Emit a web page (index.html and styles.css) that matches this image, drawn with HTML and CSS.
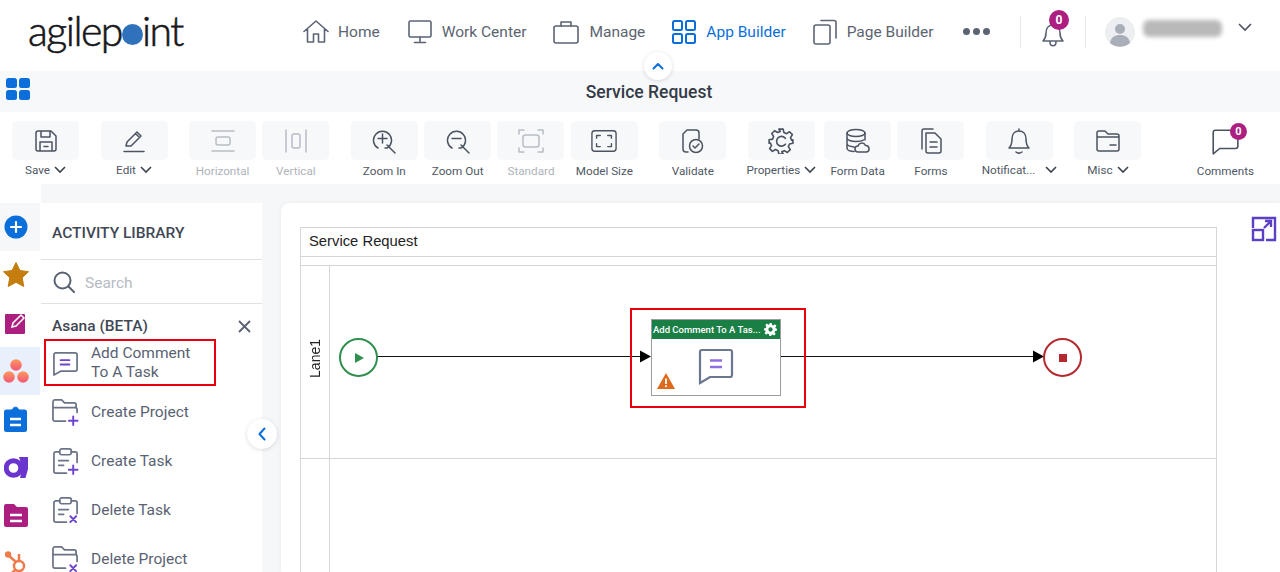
FILE: index.html
```html
<!DOCTYPE html>
<html lang="en">
<head>
<meta charset="utf-8">
<title>Service Request</title>
<link rel="stylesheet" href="styles.css">
</head>
<body>
<div class="app">
  <header class="topbar">
    <div class="logo">agilep<span class="logo-dot"></span>int</div>
    <nav class="nav">
      <a class="nav-item tight"><svg class="nav-ico" width="26" height="26" viewBox="0 0 26 26"><path d="M1 12.500 13 2l12 10.500M4.500 10v13h6v-8h5v8h6V10"/></svg>Home</a>
      <a class="nav-item"><svg class="nav-ico" width="24" height="26" viewBox="0 0 24 26"><rect x="1" y="2" width="22" height="16" rx="1.500"/><path d="M12 18v5M6.500 23.500h11"/></svg>Work Center</a>
      <a class="nav-item"><svg class="nav-ico" width="26" height="26" viewBox="0 0 26 26"><rect x="1" y="7" width="24" height="17" rx="2"/><path d="M8 7V3h10v4"/></svg>Manage</a>
      <a class="nav-item active"><svg class="nav-ico" width="24" height="24" viewBox="0 0 24 24"><rect x="1" y="1" width="9" height="9" rx="1.500"/><rect x="14" y="1" width="9" height="9" rx="1.500"/><rect x="1" y="14" width="9" height="9" rx="1.500"/><rect x="14" y="14" width="9" height="9" rx="1.500"/></svg>App Builder</a>
      <a class="nav-item"><svg class="nav-ico" width="24" height="26" viewBox="0 0 24 26"><rect x="1" y="6" width="16" height="19" rx="2"/><path d="M8 1.500h13a2 2 0 0 1 2 2V19"/></svg>Page Builder</a>
      <div class="dots"><i></i><i></i><i></i></div>
    </nav>
    <div class="divider first"></div>
    <div class="bell">
      <svg class="nav-ico" width="24" height="28" viewBox="0 0 24 28"><path d="M2 21c2-2 3-4 3-8 0-5 3-8 7-8s7 3 7 8c0 4 1 6 3 8zM9 22c0 5 6 5 6 0"/></svg>
      <span class="badge">0</span>
    </div>
    <div class="divider"></div>
    <div class="avatar"><svg width="30" height="30" viewBox="0 0 30 30"><circle cx="15" cy="15" r="15" fill="#eceef1"/><circle cx="15" cy="12" r="5" fill="#a9aeb8"/><path d="M5 26c1-6 5-8 10-8s9 2 10 8a15 15 0 0 1-20 0z" fill="#a9aeb8"/></svg></div>
    <div class="username"></div>
    <svg class="user-chev" width="14" height="9" viewBox="0 0 14 9"><path d="M1 1l6 6 6-6"/></svg>
  </header>
  <button class="collapse-top"><svg width="12" height="8" viewBox="0 0 12 8"><path d="M1.500 6.500 6 2l4.500 4.500"/></svg></button>

  <div class="titlebar">
    <svg class="grid-ico" width="24" height="22" viewBox="0 0 24 22"><rect width="11" height="10" rx="2.500"/><rect x="13" width="11" height="10" rx="2.500"/><rect y="12" width="11" height="10" rx="2.500"/><rect x="13" y="12" width="11" height="10" rx="2.500"/></svg>
    <h1 class="title">Service Request</h1>
  </div>

  <div class="toolbar">
    <div class="tool menu"><div class="tool-btn"><svg class="ico" viewBox="0 0 24 24"><path d="M4 2h13l5 5v13a2 2 0 0 1-2 2H4a2 2 0 0 1-2-2V4a2 2 0 0 1 2-2zM7 2v6h9V2M6 22v-9h12v9M10 17.500h4"/></svg></div><span class="tool-label">Save<svg class="chev" viewBox="0 0 12 8"><path d="M1 1l5 5 5-5"/></svg></span></div>
    <div class="tool menu"><div class="tool-btn"><svg class="ico" viewBox="0 0 24 24"><path d="M4 17l1-4L15 3l4 4L9 17zM13.500 4.500l4 4M2 22.500h20"/></svg></div><span class="tool-label">Edit<svg class="chev" viewBox="0 0 12 8"><path d="M1 1l5 5 5-5"/></svg></span></div>
    <div class="tool-group">
      <div class="tool off"><div class="tool-btn"><svg class="ico" viewBox="0 0 24 24"><path d="M1 2h22M1 22h22"/><rect x="5" y="8" width="14" height="8" rx="2"/></svg></div><span class="tool-label">Horizontal</span></div>
      <div class="tool off"><div class="tool-btn"><svg class="ico" viewBox="0 0 24 24"><path d="M2 1v22M22 1v22"/><rect x="8" y="5" width="8" height="14" rx="2"/></svg></div><span class="tool-label">Vertical</span></div>
    </div>
    <div class="tool-group">
      <div class="tool"><div class="tool-btn"><svg class="ico big" viewBox="0 0 26 26"><path d="M7 20a9 9 0 1 1 9 0h-2M16 17l8 8M11.500 6v9M7 10.500h9"/></svg></div><span class="tool-label">Zoom In</span></div>
      <div class="tool"><div class="tool-btn"><svg class="ico big" viewBox="0 0 26 26"><path d="M7 20a9 9 0 1 1 9 0h-2M16 17l8 8M7 10.500h9"/></svg></div><span class="tool-label">Zoom Out</span></div>
      <div class="tool off"><div class="tool-btn"><svg class="ico big" viewBox="0 0 26 26"><path d="M1 6V2h5M20 2h5v4M25 20v4h-5M6 24H1v-4"/><rect x="5" y="7" width="16" height="12" rx="2.500"/></svg></div><span class="tool-label">Standard</span></div>
      <div class="tool"><div class="tool-btn"><svg class="ico big" viewBox="0 0 28 24"><rect x="1" y="1" width="26" height="22" rx="3"/><path d="M6 9V6h4M18 6h4v3M22 15v3h-4M10 18H6v-3"/></svg></div><span class="tool-label">Model Size</span></div>
    </div>
    <div class="tool"><div class="tool-btn"><svg class="ico big" viewBox="0 0 26 26"><path d="M8 24H6a3 3 0 0 1-3-3V6l4-4h9a3 3 0 0 1 3 3v6"/><circle cx="16" cy="18" r="6.500"/><path d="M13 18l2 2 4-4"/></svg></div><span class="tool-label">Validate</span></div>
    <div class="tool-group">
      <div class="tool menu"><div class="tool-btn"><svg class="ico big" viewBox="0 0 24 24"><path d="M10 1h4l.7 3.200 2.400 1 2.800-1.700 2.600 2.600-1.700 2.800 1 2.400L23 10.900v3.200l-3.200.7-1 2.400 1.700 2.800-2.600 2.600-2.800-1.700-2.400 1L14 24h-4l-.7-3.100-2.400-1-2.800 1.700-2.600-2.600 1.700-2.800-1-2.400L1 14.100v-3.200l3.200-.6 1-2.400L3.500 5.100l2.600-2.600 2.800 1.700 2.400-1z"/><path d="M16 9.500a4.500 4.500 0 1 0 0 5.500"/></svg></div><span class="tool-label">Properties<svg class="chev" viewBox="0 0 12 8"><path d="M1 1l5 5 5-5"/></svg></span></div>
      <div class="tool shifted"><div class="tool-btn"><svg class="ico big" viewBox="0 0 26 26"><ellipse cx="11" cy="5" rx="9" ry="3.500"/><path d="M2 5v15c0 2 3 3.500 7 3.500M20 5v7M2 10c0 2 4 3.500 9 3.500 3 0 6-.5 7.500-1.500M2 15.500c0 2 3 3 7 3.500M13 24a3 3 0 0 1 0-6 4 4 0 0 1 7.500-.5A3.300 3.300 0 0 1 21.500 24z"/></svg></div><span class="tool-label">Form Data</span></div>
      <div class="tool"><div class="tool-btn"><svg class="ico big" viewBox="0 0 26 26"><path d="M4 21V3a2 2 0 0 1 2-2h9"/><path d="M8 5h9l6 6v12a2 2 0 0 1-2 2H10a2 2 0 0 1-2-2zM12 14h7M12 19h7"/></svg></div><span class="tool-label">Forms</span></div>
    </div>
    <div class="tool menu"><div class="tool-btn"><svg class="ico big" viewBox="0 0 26 26"><path d="M13 1v2M3 20c2-2 3-4 3-9 0-5 3-8 7-8s7 3 7 8c0 5 1 7 3 9zM10 24c2 1.500 4 1.500 6 0"/></svg></div><span class="tool-label">Notificat...<svg class="chev wide" viewBox="0 0 12 8"><path d="M1 1l5 5 5-5"/></svg></span></div>
    <div class="tool menu"><div class="tool-btn"><svg class="ico big" viewBox="0 0 26 26"><path d="M2 9V5a2 2 0 0 1 2-2h6l3 3h9a2 2 0 0 1 2 2v2M2 9h22M2 9v12a2 2 0 0 0 2 2h18a2 2 0 0 0 2-2V9M15 17h6"/></svg></div><span class="tool-label">Misc<svg class="chev" viewBox="0 0 12 8"><path d="M1 1l5 5 5-5"/></svg></span></div>
    <div class="tool comments"><div class="tool-btn plain"><svg class="ico large" viewBox="0 0 28 28"><path d="M20 4H5a2 2 0 0 0-2 2v20l6-5h15a2 2 0 0 0 2-2v-7"/></svg><span class="badge small">0</span></div><span class="tool-label">Comments</span></div>
  </div>

  <main class="workspace">
    <aside class="rail">
      <div class="rail-item top"><svg width="24" height="24" viewBox="0 0 24 24"><circle cx="12" cy="12" r="11.500" fill="#0b6fdb"/><path d="M12 7v10M7 12h10" stroke="#fff" stroke-width="2.200" stroke-linecap="round"/></svg></div>
      <div class="rail-item"><svg width="26" height="26" viewBox="0 0 26 26"><path d="M13 .5l3.900 8 8.600 1.200-6.300 6 1.600 8.800L13 20.300 5.200 24.500l1.600-8.800-6.300-6 8.600-1.200z" fill="#c47d0e" stroke="#c47d0e" stroke-linejoin="round"/></svg></div>
      <div class="rail-item"><svg width="22" height="22" viewBox="0 0 22 22"><rect y="2" width="20" height="20" rx="1" fill="#ac1f80"/><path d="M7 15l1-4 8-8 3 3-8 8z" fill="#ac1f80" stroke="#fff" stroke-width="1.500"/></svg></div>
      <div class="rail-item selected"><svg width="26" height="24" viewBox="0 0 26 24"><defs><linearGradient id="asana" x1="0" y1="0" x2="0" y2="1"><stop offset="0" stop-color="#ff9a5a"/><stop offset="1" stop-color="#f2557a"/></linearGradient></defs><circle cx="13" cy="6" r="5.800" fill="url(#asana)"/><circle cx="6" cy="18" r="5.800" fill="url(#asana)"/><circle cx="20" cy="18" r="5.800" fill="url(#asana)"/></svg></div>
      <div class="rail-item"><svg width="24" height="26" viewBox="0 0 24 26"><rect y="3.500" width="23" height="22.500" rx="2.500" fill="#0b6fdb"/><path d="M7 6 9 2.500a3 3 0 0 1 5 0L16 6z" fill="#0b6fdb" stroke="#0b6fdb"/><path d="M6 13h11M6 19h11" stroke="#fff" stroke-width="2.500"/></svg></div>
      <div class="rail-item"><svg width="24" height="22" viewBox="0 0 24 22"><circle cx="9.500" cy="12" r="7.300" fill="none" stroke="#6a35cf" stroke-width="5"/><path d="M15 1H24V22H16L18.500 12z" fill="#6a35cf"/><path d="M24 13 21.500 22H24z" fill="#fff"/></svg></div>
      <div class="rail-item"><svg width="24" height="24" viewBox="0 0 24 24"><path d="M2 1h8l3 3h9a2 2 0 0 1 2 2v16a2 2 0 0 1-2 2H2a2 2 0 0 1-2-2V3a2 2 0 0 1 2-2z" fill="#ac1f80"/><path d="M6 12h12M6 18h12" stroke="#fff" stroke-width="2.500"/></svg></div>
      <div class="rail-item"><svg width="22" height="24" viewBox="0 0 22 24" fill="none" stroke="#ef7a4c" stroke-width="2.500"><circle cx="14" cy="15" r="5"/><path d="M3 4l8 7M14 10V3M10 19l-4 4"/><circle cx="3" cy="3.500" r="2" fill="#ef7a4c"/></svg></div>
    </aside>

    <section class="library">
      <h2 class="lib-title">ACTIVITY LIBRARY</h2>
      <div class="lib-search"><svg class="search-ico" width="22" height="22" viewBox="0 0 22 22"><circle cx="9.500" cy="9.500" r="8"/><path d="M15.500 15.500l5.500 5.500"/></svg><span>Search</span></div>
      <div class="lib-head"><span>Asana (BETA)</span><svg class="close" width="13" height="13" viewBox="0 0 13 13"><path d="M1 1l11 11M12 1 1 12"/></svg></div>
      <ul class="lib-list">
        <li class="lib-item marked"><svg class="lib-ico" width="27" height="27" viewBox="0 0 28 28"><path d="M4 3h20a2 2 0 0 1 2 2v15a2 2 0 0 1-2 2H9l-7 4V5a2 2 0 0 1 2-2z"/><path class="accent" d="M9 10.500h9M9 15h9"/></svg><span>Add Comment<br>To A Task</span></li>
        <li class="lib-item"><svg class="lib-ico" width="27" height="27" viewBox="0 0 28 28"><path d="M14 23H3a2 2 0 0 1-2-2V3a2 2 0 0 1 2-2h7l3 3h10a2 2 0 0 1 2 2v3M1 9h23a2 2 0 0 1 2 2v3"/><path class="accent" d="M22 18v9M17.500 22.500h9"/></svg><span>Create Project</span></li>
        <li class="lib-item"><svg class="lib-ico" width="27" height="27" viewBox="0 0 28 28"><path d="M8 4H4a2 2 0 0 0-2 2v18a2 2 0 0 0 2 2h11M20 4h4a2 2 0 0 1 2 2v9"/><rect x="8" y="1" width="12" height="6" rx="2"/><path d="M7 13h10M7 18h5"/><path class="accent" d="M22 18v9M17.500 22.500h9"/></svg><span>Create Task</span></li>
        <li class="lib-item"><svg class="lib-ico" width="27" height="27" viewBox="0 0 28 28"><path d="M8 4H4a2 2 0 0 0-2 2v18a2 2 0 0 0 2 2h11M20 4h4a2 2 0 0 1 2 2v11"/><rect x="8" y="1" width="12" height="6" rx="2"/><path d="M7 13h10M7 18h5"/><path class="accent" d="M19 20l6 6M25 20l-6 6"/></svg><span>Delete Task</span></li>
        <li class="lib-item"><svg class="lib-ico" width="27" height="27" viewBox="0 0 28 28"><path d="M14 23H3a2 2 0 0 1-2-2V3a2 2 0 0 1 2-2h7l3 3h10a2 2 0 0 1 2 2v3M1 9h23a2 2 0 0 1 2 2v5"/><path class="accent" d="M19 20l6 6M25 20l-6 6"/></svg><span>Delete Project</span></li>
      </ul>
      <button class="collapse-side"><svg width="8" height="14" viewBox="0 0 8 14"><path d="M6.500 1.500 1.500 7l5 5.500"/></svg></button>
    </section>

    <section class="canvas">
      <div class="pool">
        <div class="pool-head">Service Request</div>
        <div class="lane first"><div class="lane-label"><span>Lane1</span></div><div class="lane-body"></div></div>
        <div class="lane"><div class="lane-label"></div><div class="lane-body"></div></div>
      </div>
      <svg class="expand" width="26" height="26" viewBox="0 0 26 26"><path d="M2 12V2h22v22H15M13 12l7-7M14 5h6v6"/><rect x="2" y="14" width="10" height="10"/></svg>
      <svg class="wires" width="999" height="369" viewBox="0 0 999 369"><path d="M96 153.500H360M500 153.500H752" stroke="#111" stroke-width="1"/><path d="M359 147.500l11 6-11 6zM752 147.500l11 6-11 6z" fill="#000"/></svg>
      <div class="event start"><svg width="14" height="14" viewBox="0 0 14 14"><path d="M3 2l9 5-9 5z" fill="#2f8f4e"/></svg></div>
      <div class="event stop"><i></i></div>
      <div class="task">
        <div class="task-head"><span>Add Comment To A Tas...</span><svg width="13" height="13" viewBox="0 0 24 24"><path fill="#fff" fill-rule="evenodd" d="M10 0h4l.7 3.400 2.400 1 3-1.900 2.800 2.800-1.900 3 1 2.400L24 10v4l-3.400.7-1 2.400 1.900 3-2.800 2.800-3-1.900-2.400 1L14 24h-4l-.7-3.400-2.400-1-3 1.900-2.800-2.800 1.900-3-1-2.400L0 14v-4l3.400-.7 1-2.400-1.900-3 2.800-2.800 3 1.900 2.400-1zM12 8a4 4 0 1 0 0 8 4 4 0 0 0 0-8z"/></svg></div>
        <div class="task-body">
          <svg class="task-ico" width="36" height="37" viewBox="0 0 36 37"><path d="M4 2h28a2 2 0 0 1 2 2v23a2 2 0 0 1-2 2H12l-10 6V4a2 2 0 0 1 2-2z" fill="none" stroke="#6b7690" stroke-width="2.200"/><path d="M12 12.500h12M12 19h12" stroke="#8f6fe0" stroke-width="2.500"/></svg>
          <svg class="warn" width="18" height="16" viewBox="0 0 18 16"><path d="M9 0l9 16H0z" fill="#e06a1b"/><path d="M9 5.500v5.500M9 12.300v1.700" stroke="#fff" stroke-width="1.800"/></svg>
        </div>
      </div>
      <div class="mark-box"></div>
    </section>
  </main>
</div>
</body>
</html>
```
FILE: styles.css
```css
* { box-sizing: border-box; }
html, body { margin: 0; height: 100%; overflow: hidden; background: #fff; }
body { font-family: Roboto, "Liberation Sans", sans-serif; color: #4b5361; }
svg { display: block; flex: none; }
h1, h2, ul { margin: 0; padding: 0; }

.app { position: relative; display: flex; flex-direction: column; height: 572px; overflow: hidden; }

/* top bar */
.topbar { display: flex; align-items: center; height: 71px; padding: 0 0 8px 28px; flex: none; }
.logo { width: 275px; font: 300 41px/1 Lato, sans-serif; color: #17171b; -webkit-text-stroke: .6px #17171b; letter-spacing: -1.500px; display: flex; align-items: baseline; position: relative; top: -1px; }
.logo-dot { display: inline-block; width: 21px; height: 21px; margin: 0 -1px 0 0; border-radius: 50%; background: #2f72bb; align-self: center; position: relative; top: 4px; }
.nav { display: flex; align-items: center; gap: 27px; width: 717px; }
.nav-item { display: flex; align-items: center; gap: 10px; font-size: 15.500px; color: #5c6470; white-space: nowrap; }
.nav-item.tight { gap: 9px; margin-right: 1px; }
.nav-ico { fill: none; stroke: #5b6475; stroke-width: 1.600; stroke-linecap: round; stroke-linejoin: round; }
.nav-item.active { color: #0b6fdb; }
.nav-item.active .nav-ico { stroke: #0b6fdb; stroke-width: 2; }
.dots { display: flex; gap: 3px; margin-left: 2px; }
.dots i { width: 7px; height: 7px; border-radius: 50%; background: #5b6475; }
.divider { width: 1px; height: 32px; background: #e6e8ec; margin-left: 21px; }
.divider.first { margin-left: 0; }
.bell { position: relative; margin-left: 20px; padding-top: 4px; }
.badge { position: absolute; top: -6px; left: 8px; width: 20px; height: 20px; border-radius: 50%; background: #ac1f80; color: #fff; font: 700 12px/20px Roboto, sans-serif; text-align: center; }
.bell + .divider { margin-left: 20px; }
.avatar { margin-left: 19px; }
.username { width: 79px; height: 17px; margin: 0 16px 6px 8px; border-radius: 6px; background: #b9b9b9; filter: blur(2px); }
.user-chev { fill: none; stroke: #4b5361; stroke-width: 1.600; margin-bottom: 8px; }

.collapse-top { position: absolute; left: 644px; top: 52px; width: 28px; height: 28px; padding: 0; border: 0; border-radius: 50%; background: #fff; box-shadow: 0 1px 4px rgba(60,70,90,.18); display: flex; align-items: center; justify-content: center; z-index: 2; }
.collapse-top path { fill: none; stroke: #0b6fdb; stroke-width: 2; stroke-linecap: round; stroke-linejoin: round; }

/* title */
.titlebar { position: relative; display: flex; align-items: center; justify-content: center; height: 41px; background: #f7f8fa; flex: none; padding-left: 18px; }
.grid-ico { position: absolute; left: 6px; top: 7px; fill: #0b6fdb; }
.title { font-size: 17.500px; font-weight: 500; color: #343b47; line-height: 42px; }

/* toolbar */
.toolbar { display: flex; align-items: flex-start; gap: 21.500px; height: 72px; padding: 9px 0 0 12px; flex: none; background: #fff; }
.tool-group { display: flex; gap: 6.330px; }
.tool { width: 67px; display: flex; flex-direction: column; align-items: center; }
.tool.shifted { margin-left: 3px; }
.tool-btn { position: relative; width: 67px; height: 39px; border-radius: 5px; background: #f7f8fa; display: flex; align-items: center; justify-content: center; }
.tool-btn.plain { background: none; }
.ico { width: 24px; height: 24px; fill: none; stroke: #4b5361; stroke-width: 1.500; stroke-linecap: round; stroke-linejoin: round; }
.ico.big { width: 26px; height: 26px; }
.ico.large { width: 30px; height: 30px; }
.tool-label { display: flex; align-items: center; gap: 4px; height: 14px; margin-top: 3px; font-size: 11.700px; line-height: 14px; color: #4f5764; white-space: nowrap; }
.tool:not(.menu) .tool-label { margin-top: 4px; }
.chev { width: 12px; height: 8px; fill: none; stroke: #3c4350; stroke-width: 1.600; }
.chev.wide { margin-left: 6px; }
.off .ico { stroke: #b8bdc6; }
.off .tool-label { color: #aeb3bb; }
.comments { margin-left: 29px; }
.badge.small { top: 2px; left: 38px; width: 17px; height: 17px; font-size: 11px; line-height: 17px; }

/* workspace */
.workspace { flex: 1; min-height: 0; display: flex; align-items: stretch; background: #f6f7f9; padding-top: 19px; }
.rail { width: 41px; flex: none; display: flex; flex-direction: column; background: #fff; margin-top: -19px; padding-top: 19px; }
.rail-item { height: 48px; width: 40px; display: flex; align-items: center; justify-content: center; padding-right: 8px; flex: none; }
.rail-item.top { background: #f6f7f9; }
.rail-item.selected { background: #e8f1fb; }

.library { position: relative; width: 221px; flex: none; background: #fff; }
.lib-title { height: 57px; border-bottom: 1px solid #dfe1e7; padding: 21px 0 0 11px; font-size: 15.500px; font-weight: 500; line-height: 19px; color: #3f4755; }
.lib-search { height: 44px; border-bottom: 1px solid #dfe1e7; display: flex; align-items: center; gap: 10px; padding: 2px 0 0 12px; font-size: 15.500px; color: #b5bac3; }
.search-ico { fill: none; stroke: #596272; stroke-width: 2; stroke-linecap: round; margin-top: -1px; }
.lib-head { display: flex; justify-content: space-between; align-items: center; height: 35px; padding: 8px 11px 0 11px; font-size: 15.500px; font-weight: 500; color: #3f4755; }
.close { fill: none; stroke: #596272; stroke-width: 1.800; margin-top: 2px; }
.lib-list { list-style: none; }
.lib-item { position: relative; display: flex; align-items: center; gap: 12px; height: 49px; padding-left: 11px; font-size: 15.500px; line-height: 19px; color: #596272; }
.lib-ico { fill: none; stroke: #6b7486; stroke-width: 1.800; stroke-linecap: round; stroke-linejoin: round; }
.lib-ico .accent { stroke: #6d45cf; stroke-width: 2; }
.marked span { position: relative; top: -1px; }
.marked::after { content: ""; box-sizing: border-box; position: absolute; left: 3px; top: 0; width: 172px; height: 47px; border: 2px solid #e8000d; }
.collapse-side { position: absolute; left: 206px; top: 216px; width: 30px; height: 30px; padding: 0; border: 0; border-radius: 50%; background: #fff; box-shadow: 0 1px 4px rgba(60,70,90,.18); display: flex; align-items: center; justify-content: center; }
.collapse-side path { fill: none; stroke: #0b6fdb; stroke-width: 2; stroke-linecap: round; stroke-linejoin: round; }

/* canvas */
.canvas { position: relative; flex: 1; min-width: 0; margin-left: 19px; background: #fff; border-top-left-radius: 8px; padding: 24px 0 0 19px; overflow: hidden; box-shadow: 0 0 4px rgba(60,70,90,.08); }
.pool { width: 917px; border: 1px solid #d6d6d6; border-bottom: 0; height: 360px; }
.pool-head { height: 29px; border-bottom: 1px solid #d6d6d6; padding-left: 8px; font: 14.800px/27px "Liberation Sans", sans-serif; color: #222; margin-bottom: 8px; }
.lane { display: flex; border-top: 1px solid #d6d6d6; height: 193px; }
.lane-label { width: 29px; border-right: 1px solid #d6d6d6; display: flex; align-items: center; justify-content: center; padding-bottom: 8px; font: 14px "Liberation Sans", sans-serif; color: #222; }
.lane-label span { writing-mode: vertical-rl; transform: rotate(180deg); }
.lane-body { flex: 1; }
.expand { position: absolute; left: 970px; top: 13px; fill: none; stroke: #5b3fc4; stroke-width: 2.400; }
.wires { position: absolute; left: 0; top: 0; }
.event { position: absolute; width: 39px; height: 39px; border-radius: 50%; background: #fff; display: flex; align-items: center; justify-content: center; border: 2px solid; }
.event.start { left: 58px; top: 135px; border-color: #2f8f4e; }
.event.stop { left: 762px; top: 135px; border-color: #b5282f; }
.event.stop i { width: 8px; height: 8px; background: #b5282f; }
.task { position: absolute; left: 370px; top: 116px; width: 130px; height: 77px; border: 1px solid #9c9c9c; background: #fff; }
.task-head { display: flex; align-items: center; justify-content: space-between; height: 19px; padding: 0 3px 0 1px; background: #1a7f45; color: #fff; font-size: 9.500px; font-weight: 500; white-space: nowrap; }
.task-body { position: relative; height: 56px; }
.task-ico { position: absolute; left: 46px; top: 9px; }
.warn { position: absolute; left: 5px; top: 34px; }
.mark-box { position: absolute; left: 349px; top: 105px; width: 176px; height: 100px; border: 2px solid #e8000d; }
```
